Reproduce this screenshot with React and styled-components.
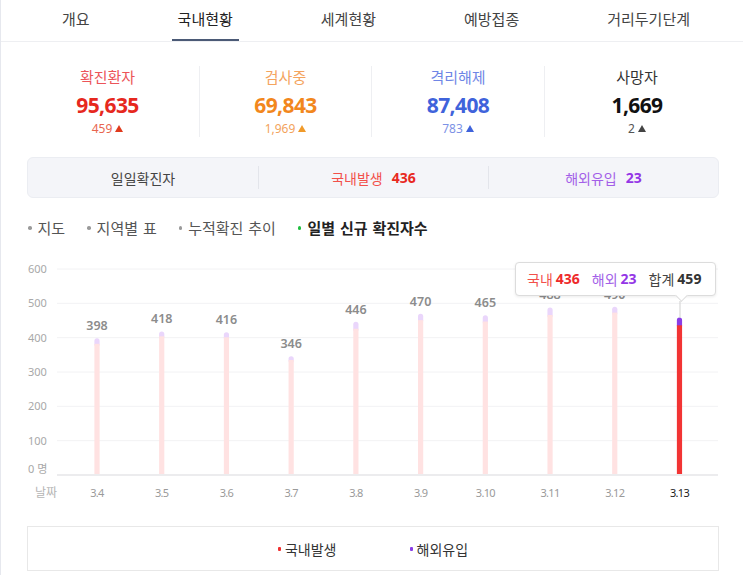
import React from 'react';
import styled, { createGlobalStyle, css } from 'styled-components';

const Global = createGlobalStyle`
  html, body { margin: 0; padding: 0; background: #fff; }
  body { font-family: "Noto Sans", "Noto Sans CJK KR", sans-serif; color: #333; }
  * { box-sizing: border-box; }
`;

const Page = styled.div`
  width: 743px;
  height: 575px;
  overflow: hidden;
  border-left: 1px solid #e6e8ee;
`;

const Tabs = styled.nav`
  display: flex;
  height: 42px;
  padding-left: 55px;
  gap: 76px;
  border-bottom: 1px solid #eeeff2;
`;

const Tab = styled.div`
  position: relative;
  height: 41px;
  padding: 0 6px;
  line-height: 38px;
  font-size: 15px;
  color: #444;
  ${p => p.$active && css`
    color: #222;
    &::after {
      content: '';
      position: absolute;
      left: 0;
      right: 0;
      bottom: 0;
      height: 2px;
      background: #4b5a76;
    }
  `}
`;

const tones = {
  red: { label: '#ec5459', num: '#e6281e', delta: '#e8664f', tri: '#e03a1c' },
  orange: { label: '#f4a45e', num: '#f2871d', delta: '#f3a35c', tri: '#f09a2a' },
  blue: { label: '#6f86e6', num: '#3f63db', delta: '#7d92e6', tri: '#3f63db' },
  dark: { label: '#333', num: '#111', delta: '#555', tri: '#444' },
};

const Stats = styled.div`
  display: grid;
  grid-template-columns: 183px 172px 173px 185px;
  margin: 24px 0 0 15px;
`;

const Stat = styled.div`
  display: flex;
  flex-direction: column;
  align-items: center;
  height: 71px;
  padding-top: 1px;
  & + & { border-left: 1px solid #eeeff2; }
`;

const StatLabel = styled.div`
  font-size: 15px;
  line-height: 20px;
  color: ${p => tones[p.$tone].label};
`;

const StatNum = styled.div`
  margin-top: 4px;
  font-size: 21px;
  line-height: 28px;
  font-weight: 700;
  letter-spacing: -0.6px;
  color: ${p => tones[p.$tone].num};
`;

const StatDelta = styled.div`
  display: flex;
  align-items: center;
  gap: 3px;
  margin-top: 2px;
  font-size: 12px;
  line-height: 16px;
  color: ${p => tones[p.$tone].delta};
`;

const Tri = styled.span`
  display: inline-block;
  width: 0;
  height: 0;
  border-left: 4.5px solid transparent;
  border-right: 4.5px solid transparent;
  border-bottom: 7px solid ${p => tones[p.$tone].tri};
  margin-bottom: 1px;
`;

const Daily = styled.div`
  display: grid;
  grid-template-columns: 1fr 1fr 1fr;
  align-items: center;
  height: 41px;
  margin: 20px 24px 0 26px;
  background: #f4f5f9;
  border: 1px solid #ebedf2;
  border-radius: 6px;
`;

const DailyCell = styled.div`
  display: flex;
  justify-content: center;
  align-items: center;
  gap: 9px;
  height: 23px;
  font-size: 14px;
  color: ${p => p.$color || '#444'};
  & + & { border-left: 1px solid #e3e5eb; }
`;

const DailyNum = styled.b`
  font-weight: 700;
  color: ${p => p.$color};
`;

const Filters = styled.div`
  display: flex;
  gap: 22px;
  margin: 20px 0 0 27px;
  line-height: 20px;
  font-size: 15px;
`;

const Filter = styled.div`
  display: flex;
  align-items: center;
  word-spacing: 1px;
  color: ${p => (p.$active ? '#222' : '#555')};
  font-weight: ${p => (p.$active ? 700 : 400)};
  &::before {
    content: '';
    width: 3.5px;
    height: 3.5px;
    border-radius: 50%;
    margin-right: 6px;
    background: ${p => (p.$active ? '#1fbf3f' : '#9a9a9a')};
  }
`;

const ChartWrap = styled.div`
  position: relative;
  height: 256px;
  margin-top: 17px;
`;

const ChartSvg = styled.svg`
  display: block;
  font-family: "Noto Sans", "Noto Sans CJK KR", sans-serif;
`;

const Tooltip = styled.div`
  position: absolute;
  left: 514px;
  top: 7px;
  width: 201px;
  height: 34px;
  display: flex;
  align-items: center;
  gap: 12px;
  padding-left: 11px;
  background: #fff;
  border: 1px solid #dcdcdc;
  border-radius: 4px;
  box-shadow: 0 1px 3px rgba(0, 0, 0, 0.08);
  font-size: 14px;
  &::after {
    content: '';
    position: absolute;
    left: 161px;
    bottom: -5px;
    width: 8px;
    height: 8px;
    background: #fff;
    border-right: 1px solid #dcdcdc;
    border-bottom: 1px solid #dcdcdc;
    transform: rotate(45deg);
  }
`;

const TipGroup = styled.span`
  display: flex;
  gap: 3px;
  color: ${p => p.$light};
  b { color: ${p => p.$strong}; font-weight: 700; }
`;

const Legend = styled.div`
  display: flex;
  justify-content: center;
  align-items: center;
  gap: 73px;
  height: 45px;
  margin: 15px 24px 0 26px;
  border: 1px solid #e8e8e8;
  font-size: 14px;
  color: #333;
`;

const LegendItem = styled.div`
  display: flex;
  align-items: center;
  &::before {
    content: '';
    width: 3px;
    height: 4px;
    border-radius: 1px;
    margin-right: 4px;
    background: ${p => p.$color};
  }
`;

const stats = [
  { tone: 'red', label: '확진환자', num: '95,635', delta: '459' },
  { tone: 'orange', label: '검사중', num: '69,843', delta: '1,969' },
  { tone: 'blue', label: '격리해제', num: '87,408', delta: '783' },
  { tone: 'dark', label: '사망자', num: '1,669', delta: '2' },
];

const data = [
  { d: '3.4', t: 398, o: 16 },
  { d: '3.5', t: 418, o: 14 },
  { d: '3.6', t: 416, o: 15 },
  { d: '3.7', t: 346, o: 11 },
  { d: '3.8', t: 446, o: 20 },
  { d: '3.9', t: 470, o: 19 },
  { d: '3.10', t: 465, o: 18 },
  { d: '3.11', t: 488, o: 22 },
  { d: '3.12', t: 490, o: 17 },
  { d: '3.13', t: 459, o: 23 },
];

const BASE = 220;
const K = 206 / 600;
const yOf = v => BASE - v * K;

function Chart() {
  const ticks = [100, 200, 300, 400, 500, 600];
  return (
    <ChartSvg width="742" height="256" viewBox="1 0 742 256">
      {ticks.map(v => (
        <g key={v}>
          <line x1="57" x2="718" y1={yOf(v)} y2={yOf(v)} stroke="#f2f2f4" strokeWidth="1" />
          <text x="28" y={yOf(v) + 4} fontSize="11" fill="#a8a8a8">{v}</text>
        </g>
      ))}
      <text x="28" y="218" fontSize="11" fill="#a8a8a8">0 명</text>
      <line x1="57" x2="718" y1={BASE} y2={BASE} stroke="#ececee" strokeWidth="2" />
      {data.map((b, i) => {
        const cx = 97 + i * 64.72;
        const last = i === data.length - 1;
        const top = yOf(b.t);
        const mid = yOf(b.t - b.o);
        return (
          <g key={b.d}>
            <rect x={cx - 2.6} y={top} width="5.2" height={mid - top + 3} rx="2.6" fill={last ? '#8a3ee6' : '#ead6fb'} />
            <rect x={cx - 2.6} y={mid} width="5.2" height={BASE - 1 - mid} fill={last ? '#f23434' : '#ffe2e2'} />
            {!last && (
              <text x={cx} y={top - 8} fontSize="12.5" fontWeight="600" fill="#8c8c8c" textAnchor="middle">{b.t}</text>
            )}
            <text x={cx} y="242" fontSize="11" letterSpacing="-0.7" fill={last ? '#222' : '#9a9a9a'} textAnchor="middle">{b.d}</text>
          </g>
        );
      })}
      <text x="35" y="242" fontSize="12" fill="#b5b5b5">날짜</text>
      <line x1="680" x2="680" y1="46" y2="63" stroke="#cfcfcf" strokeWidth="1" />
    </ChartSvg>
  );
}

export default function App() {
  return (
    <Page>
      <Global />
      <Tabs>
        <Tab>개요</Tab>
        <Tab $active>국내현황</Tab>
        <Tab>세계현황</Tab>
        <Tab>예방접종</Tab>
        <Tab>거리두기단계</Tab>
      </Tabs>
      <Stats>
        {stats.map(s => (
          <Stat key={s.label}>
            <StatLabel $tone={s.tone}>{s.label}</StatLabel>
            <StatNum $tone={s.tone}>{s.num}</StatNum>
            <StatDelta $tone={s.tone}>
              {s.delta}
              <Tri $tone={s.tone} />
            </StatDelta>
          </Stat>
        ))}
      </Stats>
      <Daily>
        <DailyCell>일일확진자</DailyCell>
        <DailyCell $color="#f2504a">
          국내발생 <DailyNum $color="#e8291f">436</DailyNum>
        </DailyCell>
        <DailyCell $color="#a35fe8">
          해외유입 <DailyNum $color="#9436e6">23</DailyNum>
        </DailyCell>
      </Daily>
      <Filters>
        <Filter>지도</Filter>
        <Filter>지역별 표</Filter>
        <Filter>누적확진 추이</Filter>
        <Filter $active>일별 신규 확진자수</Filter>
      </Filters>
      <ChartWrap>
        <Chart />
        <Tooltip>
          <TipGroup $light="#f2504a" $strong="#ee2a2a">국내 <b>436</b></TipGroup>
          <TipGroup $light="#a35fe8" $strong="#9436e6">해외 <b>23</b></TipGroup>
          <TipGroup $light="#444" $strong="#333">합계 <b>459</b></TipGroup>
        </Tooltip>
      </ChartWrap>
      <Legend>
        <LegendItem $color="#f03030">국내발생</LegendItem>
        <LegendItem $color="#8a3ee6">해외유입</LegendItem>
      </Legend>
    </Page>
  );
}
